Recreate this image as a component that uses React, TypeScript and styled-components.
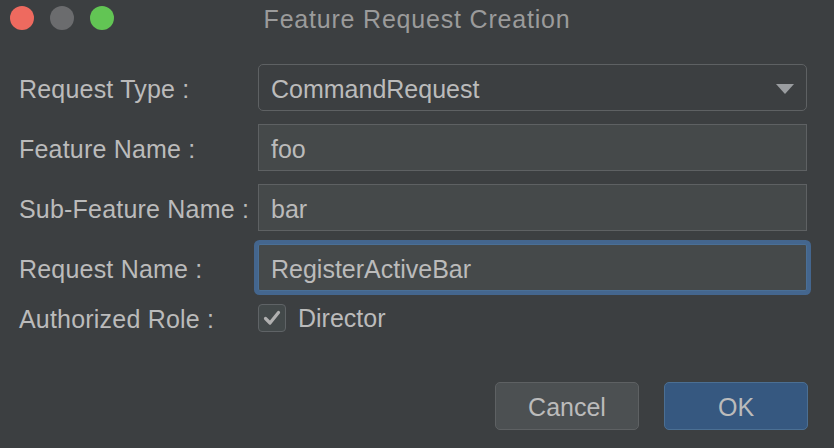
import React from "react";
import styled, { createGlobalStyle } from "styled-components";

const Global = createGlobalStyle`
  html, body { margin: 0; padding: 0; background: #3c3f41; }
  body { font-family: "Liberation Sans", Arial, sans-serif; }
  * { box-sizing: border-box; }
`;

const Window = styled.div`
  width: 834px;
  height: 448px;
  background: #3c3f41;
  display: flex;
  flex-direction: column;
  color: #bbbbbb;
  overflow: hidden;
`;

const TitleBar = styled.div`
  height: 36px;
  display: flex;
  align-items: center;
  position: relative;
  padding-left: 10px;
`;

const Lights = styled.div`
  display: flex;
  gap: 16px;
`;

const Light = styled.span<{ $color: string }>`
  width: 24px;
  height: 24px;
  border-radius: 50%;
  background: ${(p) => p.$color};
`;

const Title = styled.div`
  position: absolute;
  left: 0;
  right: 0;
  top: 5px;
  text-align: center;
  font-size: 25px;
  letter-spacing: 0.8px;
  color: #9b9b9b;
  pointer-events: none;
`;

const Form = styled.div`
  display: grid;
  grid-template-columns: 231px 1fr;
  column-gap: 8px;
  row-gap: 13px;
  padding: 28px 27px 0 19px;
  align-items: center;
`;

const Label = styled.div`
  font-size: 25px;
  line-height: 24px;
  color: #bbbbbb;
  white-space: nowrap;
  padding-top: 2px;
  letter-spacing: 0.2px;
`;

const Select = styled.div`
  height: 47px;
  border: 1px solid #5e6163;
  border-radius: 5px;
  background: #3c3f41;
  display: flex;
  align-items: center;
  justify-content: space-between;
  padding: 3px 12px 0 12px;
  font-size: 25px;
  color: #bbbbbb;
`;

const Field = styled.div<{ $focused?: boolean }>`
  height: 47px;
  border: 1px solid ${(p) => (p.$focused ? "#4a6f96" : "#5e6163")};
  background: #45494a;
  display: flex;
  align-items: center;
  padding: 3px 12px 0;
  font-size: 25px;
  color: #bbbbbb;
  border-radius: ${(p) => (p.$focused ? "2px" : "0")};
  box-shadow: ${(p) => (p.$focused ? "0 0 0 4px #44668e" : "none")};
`;

const CheckRow = styled.div`
  display: flex;
  align-items: center;
  gap: 12px;
  font-size: 25px;
  height: 28px;
`;

const Box = styled.span`
  width: 28px;
  height: 28px;
  border: 1.5px solid #5f6366;
  border-radius: 4px;
  background: #43494a;
  display: flex;
  align-items: center;
  justify-content: center;
`;

const Footer = styled.div`
  margin-top: auto;
  display: flex;
  justify-content: flex-end;
  gap: 25px;
  padding: 0 26px 18px 0;
`;

const Button = styled.div<{ $primary?: boolean }>`
  width: 144px;
  height: 48px;
  border-radius: 5px;
  border: 1px solid ${(p) => (p.$primary ? "#4b6f93" : "#5e6163")};
  background: ${(p) => (p.$primary ? "#365880" : "#4c5052")};
  display: flex;
  align-items: center;
  justify-content: center;
  padding-top: 2px;
  font-size: 25px;
  color: #bbbbbb;
`;

export default function App() {
  return (
    <Window>
      <Global />
      <TitleBar>
        <Lights>
          <Light $color="#ee6a5f" />
          <Light $color="#6b6c6e" />
          <Light $color="#62c554" />
        </Lights>
        <Title>Feature Request Creation</Title>
      </TitleBar>
      <Form>
        <Label>Request Type :</Label>
        <Select>
          <span>CommandRequest</span>
          <svg width="18" height="10" viewBox="0 0 18 10">
            <path d="M0 0 L18 0 L9 10 Z" fill="#9a9da0" />
          </svg>
        </Select>
        <Label>Feature Name :</Label>
        <Field>foo</Field>
        <Label>Sub-Feature Name :</Label>
        <Field>bar</Field>
        <Label>Request Name :</Label>
        <Field $focused>RegisterActiveBar</Field>
        <Label>Authorized Role :</Label>
        <CheckRow>
          <Box>
            <svg width="18" height="16" viewBox="0 0 18 16">
              <path d="M2.5 8.5 L7 13 L15.5 2.5" fill="none" stroke="#b0b0b0" strokeWidth="3.2" strokeLinecap="round" strokeLinejoin="round" />
            </svg>
          </Box>
          <span>Director</span>
        </CheckRow>
      </Form>
      <Footer>
        <Button>Cancel</Button>
        <Button $primary>OK</Button>
      </Footer>
    </Window>
  );
}
